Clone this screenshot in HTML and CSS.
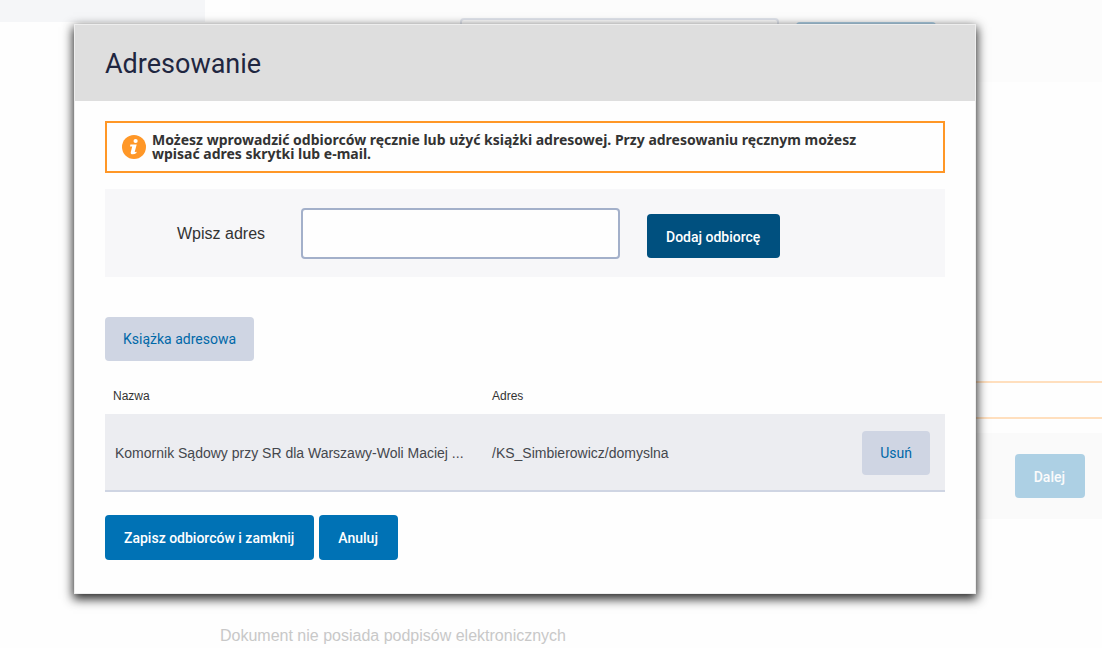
FILE: index.html
```
<!DOCTYPE html>
<html lang="pl">
<head>
  <meta charset="UTF-8" />
  <meta name="viewport" content="width=device-width, initial-scale=1.0"/>
  <title>Adresowanie</title>
  <link rel="stylesheet" href="styles.css">
</head>
<body>

  <div class="page" inert>
    <aside class="sidebar"></aside>
    <main class="content">
      <div class="search-panel">
        <input type="text" class="input" aria-label="Adresat" />
        <button type="button" class="btn btn-primary btn-wide"></button>
      </div>
      <div class="notice"></div>
      <div class="next-panel">
        <button type="button" class="btn btn-primary">Dalej</button>
      </div>
      <p class="signatures">Dokument nie posiada podpisów elektronicznych</p>
    </main>
  </div>

  <div class="modal" role="dialog" aria-labelledby="modalTitle">
    <header class="modal-header">
      <h1 id="modalTitle">Adresowanie</h1>
    </header>

    <div class="modal-body">
      <div class="info">
        <svg class="info-icon" viewBox="0 0 24 24" aria-hidden="true">
          <circle cx="12" cy="12" r="12" fill="#ff9727"/>
          <circle cx="13.6" cy="6" r="2.1" fill="#fff"/>
          <path d="M8.400 9.600h6.300l-1.900 6.900c-.1.500.1.700.5.600l1.300-.4-.2 1.300c-1.100.8-2.300 1.200-3.600 1.200-1.700 0-2.400-.9-2-2.300l1.400-5.500H8z" fill="#fff"/>
        </svg>
        <p>Możesz wprowadzić odbiorców ręcznie lub użyć książki adresowej. Przy adresowaniu ręcznym możesz wpisać adres skrytki lub e-mail.</p>
      </div>

      <form class="address-form">
        <label for="address">Wpisz adres</label>
        <input type="text" id="address" class="input" />
        <button type="button" class="btn btn-dark">Dodaj odbiorcę</button>
      </form>

      <button type="button" class="btn btn-light">Książka adresowa</button>

      <table class="recipients">
        <thead>
          <tr>
            <th class="col-name">Nazwa</th>
            <th>Adres</th>
            <th class="col-action"></th>
          </tr>
        </thead>
        <tbody>
          <tr>
            <td class="name">Komornik Sądowy przy SR dla Warszawy-Woli Maciej ...</td>
            <td>/KS_Simbierowicz/domyslna</td>
            <td class="action"><button type="button" class="btn btn-light">Usuń</button></td>
          </tr>
        </tbody>
      </table>

      <div class="actions">
        <button type="button" class="btn btn-primary">Zapisz odbiorców i zamknij</button>
        <button type="button" class="btn btn-primary">Anuluj</button>
      </div>
    </div>
  </div>

</body>
</html>
```

FILE: styles.css
```
* {
  box-sizing: border-box;
}

body {
  margin: 0;
  height: 100vh;
  overflow: hidden;
  background: #fefefe;
  color: #333;
  font-family: "Liberation Sans", Arial, sans-serif;
}

/* page under the dialog */
.page {
  display: flex;
  align-items: flex-start;
}

.sidebar {
  flex: 0 0 205px;
  height: 22px;
  background: #f5f6f8;
}

.content {
  flex: 1;
}

.search-panel {
  display: flex;
  align-items: flex-start;
  gap: 17px;
  height: 82px;
  margin-left: 45px;
  padding: 18px 0 0 210px;
  background: #fcfcfc;
}

.search-panel .input,
.search-panel .btn {
  opacity: 0.3;
}

.search-panel .btn {
  margin-top: 4px;
}

.btn-wide {
  width: 140px;
}

.notice {
  height: 38px;
  margin: 299px 0 14px 15px;
  border: 2px solid #ffdfbe;
  border-right: none;
}

.next-panel {
  display: flex;
  justify-content: flex-end;
  margin-left: 15px;
  padding: 21px 17px;
  background: #fafafa;
}

.next-panel .btn {
  opacity: 0.3;
}

.signatures {
  margin: 108px 0 0 15px;
  font-size: 16px;
  line-height: 18px;
  color: #c8c8c8;
}

/* dialog */
.modal {
  position: absolute;
  top: 24px;
  left: 74px;
  right: 126px;
  border: 1px solid #eee;
  background: #fefefe;
  box-shadow: 0 4px 10px 1px rgba(0, 0, 0, 0.85);
}

.modal-header {
  padding: 21px 30px 19px;
  background: #dedede;
}

.modal-header h1 {
  margin: 0;
  font: 400 27px/36px Roboto, sans-serif;
  color: #1f2640;
}

.modal-body {
  padding: 20px 30px 33px;
}

.info {
  display: flex;
  align-items: center;
  gap: 6px;
  padding: 10px 60px 10px 15px;
  border: 2px solid #ff9727;
}

.info-icon {
  flex: none;
  width: 24px;
  height: 24px;
}

.info p {
  margin: 0;
  font: 700 14px/14px "Noto Sans", sans-serif;
}

.address-form {
  display: flex;
  align-items: center;
  margin: 16px 0 40px;
  padding: 19px 72px 18px;
  background: #f7f7f9;
}

.address-form label {
  flex: 0 0 124px;
  font-size: 16px;
}

.address-form .btn {
  margin: 5px 0 0 27px;
}

.input {
  width: 319px;
  height: 51px;
  padding: 0 12px;
  border: 2px solid #a3b0ca;
  border-radius: 4px;
  background: #fefefe;
  font: 16px "Liberation Sans", Arial, sans-serif;
}

.btn {
  height: 44px;
  padding: 2px 20px 0 19px;
  border: none;
  border-radius: 4px;
  font: 500 14px/20px Roboto, sans-serif;
  cursor: pointer;
}

.btn-primary {
  background: #0072b5;
  color: #fff;
}

.btn-dark {
  background: #00507f;
  color: #fff;
}

.btn-light {
  padding: 0 18px;
  background: #cfd5e3;
  color: #0068a8;
  font-weight: 400;
}

.recipients {
  width: 100%;
  margin: 16px 0 23px;
  border-collapse: collapse;
  table-layout: fixed;
  text-align: left;
}

.recipients th {
  height: 37px;
  padding: 0 8px;
  font-size: 12px;
  font-weight: 400;
}

.recipients td {
  height: 77px;
  padding: 2px 8px 0;
  border-bottom: 2px solid #cfd5e3;
  background: #ecedf1;
  color: #44474d;
  font-size: 14px;
}

.recipients .name {
  padding-left: 10px;
  white-space: nowrap;
}

.recipients .action {
  padding-right: 15px;
  text-align: right;
}

.col-name {
  width: 379px;
}

.col-action {
  width: 120px;
}

.actions {
  display: flex;
  gap: 5px;
}

.actions .btn {
  height: 45px;
  padding-top: 0;
}
```
